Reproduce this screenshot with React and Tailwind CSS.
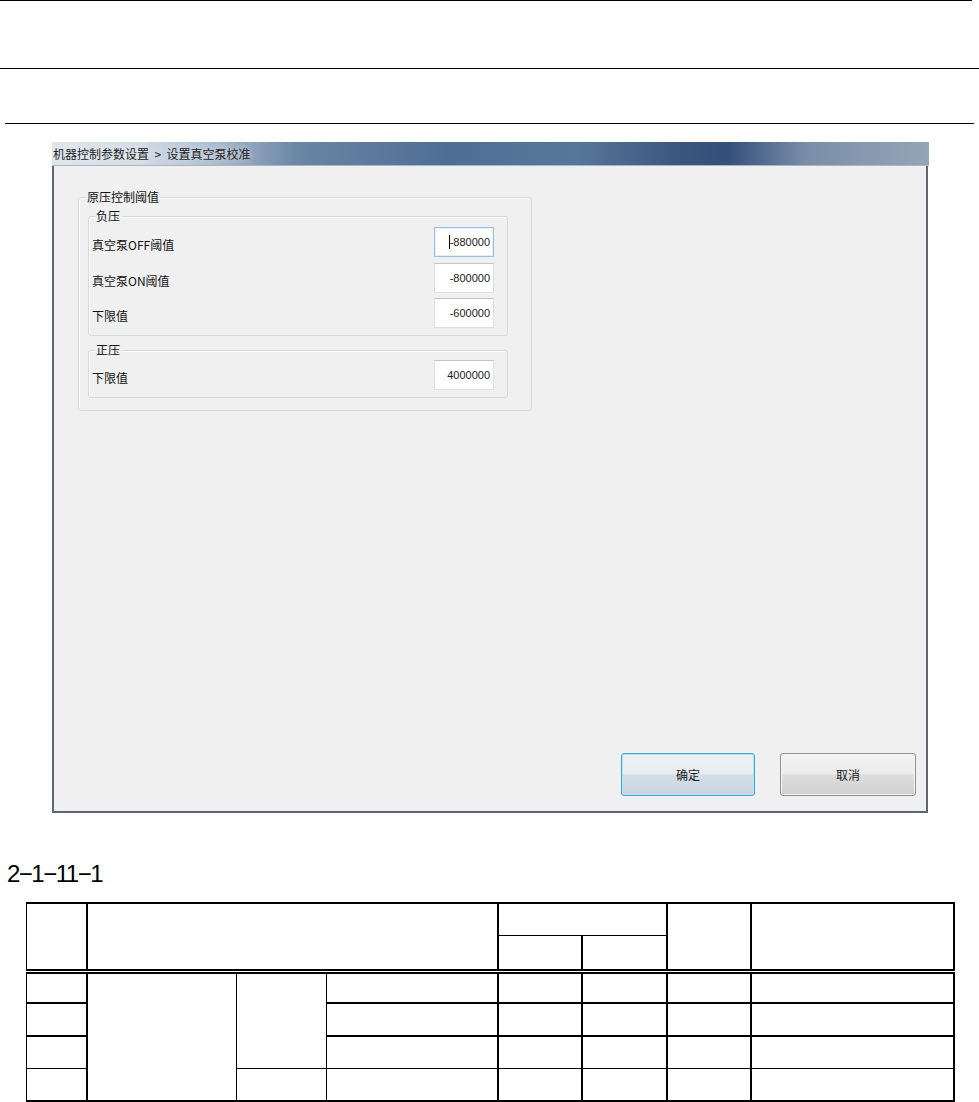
import React from 'react';

const cjk = "font-['Noto_Sans_CJK_SC','Noto_Sans',sans-serif]";

const NumInput = ({ value, focused }) => (
  <div
    className={`w-[60px] h-[30px] bg-white border flex items-center justify-end pr-[3px] text-[11px] text-[#222] font-['Liberation_Sans',sans-serif] ${
      focused
        ? 'border-[#9dc0e6] shadow-[inset_0_0_0_1px_#e4eefa]'
        : 'border-[#dedede] border-t-[#c4c4c4]'
    }`}
  >
    {focused && <span className="inline-block w-px h-[14px] bg-black" />}
    <span>{value}</span>
  </div>
);

const Row = ({ label, value, focused, className = '' }) => (
  <div className={`flex items-center justify-between pl-[3px] pr-[13px] ${className}`}>
    <span className="text-[12px] leading-[14px] text-[#111] mt-[5px]">{label}</span>
    <NumInput value={value} focused={focused} />
  </div>
);

const GroupLabel = ({ children, className = '' }) => (
  <div className={`w-fit -mt-[8px] px-[1px] bg-[#f0f0f0] text-[12px] leading-[14px] text-[#111] ${className}`}>
    {children}
  </div>
);

const Dialog = () => (
  <div className="mt-[18px] ml-[52px] w-[877px]">
    {/* title bar */}
    <div className="h-[24px] flex items-center pl-[1px] border-b border-[#a9b6c4] bg-[linear-gradient(90deg,#dfe5ec_0%,#d3dce6_10%,#aebdcf_18%,#6a86a5_28%,#4f6e94_45%,#57779a_60%,#3b577e_71%,#33507a_77%,#7a8ea9_86%,#93a6b7_100%)]">
      <span className="text-[12px] leading-[14px] text-[#1b1b1b] whitespace-pre [text-shadow:0_0_6px_#eef2f6]">
        {'机器控制参数设置  >  设置真空泵校准'}
      </span>
    </div>
    {/* client area */}
    <div className="w-[876px] h-[647px] bg-[#f0f0f0] border-l-2 border-r-2 border-b-2 border-[#5b6676] flex flex-col">
      <div className="mt-[31px] ml-[24px] w-[454px] h-[214px] border border-[#d3dbe1] rounded-[3px] shadow-[inset_1px_1px_0_#fbfbfb]">
        <GroupLabel className="ml-[7px]">原压控制阈值</GroupLabel>

        <div className="mt-[12px] ml-[9px] w-[420px] h-[120px] border border-[#d3dbe1] rounded-[3px] shadow-[inset_1px_1px_0_#fbfbfb]">
          <GroupLabel className="ml-[6px]">负压</GroupLabel>
          <Row label="真空泵OFF阈值" value="-880000" focused className="mt-[4px]" />
          <Row label="真空泵ON阈值" value="-800000" className="mt-[6px]" />
          <Row label="下限值" value="-600000" className="mt-[5px]" />
        </div>

        <div className="mt-[14px] ml-[9px] w-[420px] h-[48px] border border-[#d3dbe1] rounded-[3px] shadow-[inset_1px_1px_0_#fbfbfb]">
          <GroupLabel className="ml-[6px]">正压</GroupLabel>
          <Row label="下限值" value="4000000" className="mt-[3px]" />
        </div>
      </div>

      <div className="mt-[342px] flex justify-end gap-[25px] pr-[10px]">
        <button className="w-[134px] h-[43px] rounded-[3px] border border-[#3ba7dd] shadow-[inset_0_0_0_1px_#b8e2f6] bg-[linear-gradient(#eef1f4_0%,#e8ecf0_48%,#d3dde6_52%,#cad6e0_100%)] text-[12px] text-[#1a1a1a]">
          确定
        </button>
        <button className="w-[136px] h-[43px] rounded-[3px] border border-[#8f8f8f] shadow-[inset_0_0_0_1px_#f6f6f6] bg-[linear-gradient(#f2f2f2_0%,#ebebeb_48%,#dddddd_52%,#d0d0d0_100%)] text-[12px] text-[#1a1a1a]">
          取消
        </button>
      </div>
    </div>
  </div>
);

const SpecTable = () => {
  const c = 'border border-black p-0';
  const dbl = 'border-b-[5px] [border-bottom-style:double]';
  return (
    <table className="mt-[14px] ml-[26px] w-[927px] table-fixed border-collapse">
      <colgroup>
        <col className="w-[60px]" />
        <col className="w-[150px]" />
        <col className="w-[90px]" />
        <col className="w-[171px]" />
        <col className="w-[84px]" />
        <col className="w-[85px]" />
        <col className="w-[84px]" />
        <col className="w-[203px]" />
      </colgroup>
      <tbody>
        <tr className="h-[32px]">
          <td rowSpan={2} className={`${c} border-t-2 border-r-2 ${dbl}`} />
          <td rowSpan={2} colSpan={3} className={`${c} border-t-2 border-r-2 ${dbl}`} />
          <td colSpan={2} className={`${c} border-t-2 border-r-2`} />
          <td rowSpan={2} className={`${c} border-t-2 border-r-2 ${dbl}`} />
          <td rowSpan={2} className={`${c} border-t-2 border-r-2 ${dbl}`} />
        </tr>
        <tr className="h-[36px]">
          <td className={`${c} border-r-2 ${dbl}`} />
          <td className={`${c} border-r-2 ${dbl}`} />
        </tr>
        <tr className="h-[32px]">
          <td className={`${c} border-r-2 border-b-2`} />
          <td rowSpan={4} className={`${c} border-b-2`} />
          <td rowSpan={3} className={c} />
          <td className={`${c} border-r-2 border-b-2`} />
          <td className={`${c} border-r-2 border-b-2`} />
          <td className={`${c} border-r-2 border-b-2`} />
          <td className={`${c} border-r-2 border-b-2`} />
          <td className={`${c} border-r-2 border-b-2`} />
        </tr>
        <tr className="h-[33px]">
          <td className={`${c} border-r-2 border-b-2`} />
          <td className={`${c} border-r-2 border-b-2`} />
          <td className={`${c} border-r-2 border-b-2`} />
          <td className={`${c} border-r-2 border-b-2`} />
          <td className={`${c} border-r-2 border-b-2`} />
          <td className={`${c} border-r-2 border-b-2`} />
        </tr>
        <tr className="h-[32px]">
          <td className={`${c} border-r-2`} />
          <td className={`${c} border-r-2`} />
          <td className={`${c} border-r-2`} />
          <td className={`${c} border-r-2`} />
          <td className={`${c} border-r-2`} />
          <td className={`${c} border-r-2`} />
        </tr>
        <tr className="h-[33px]">
          <td className={`${c} border-r-2 border-b-2`} />
          <td className={`${c} border-b-2`} />
          <td className={`${c} border-r-2 border-b-2`} />
          <td className={`${c} border-r-2 border-b-2`} />
          <td className={`${c} border-r-2 border-b-2`} />
          <td className={`${c} border-r-2 border-b-2`} />
          <td className={`${c} border-r-2 border-b-2`} />
        </tr>
      </tbody>
    </table>
  );
};

export default function App() {
  return (
    <div className={`w-[979px] h-[1102px] bg-white overflow-hidden ${cjk}`}>
      <div className="w-[972px] h-px bg-black" />
      <div className="mt-[67px] w-[979px] h-px bg-black" />
      <div className="mt-[54px] ml-[5px] w-[969px] h-px bg-black" />

      <Dialog />

      <div className="mt-[47px] ml-[7px] text-[24px] leading-[28px] tracking-[-1.5px] text-black font-['Liberation_Sans',sans-serif]">
        2−1−11−1
      </div>

      <SpecTable />
    </div>
  );
}
